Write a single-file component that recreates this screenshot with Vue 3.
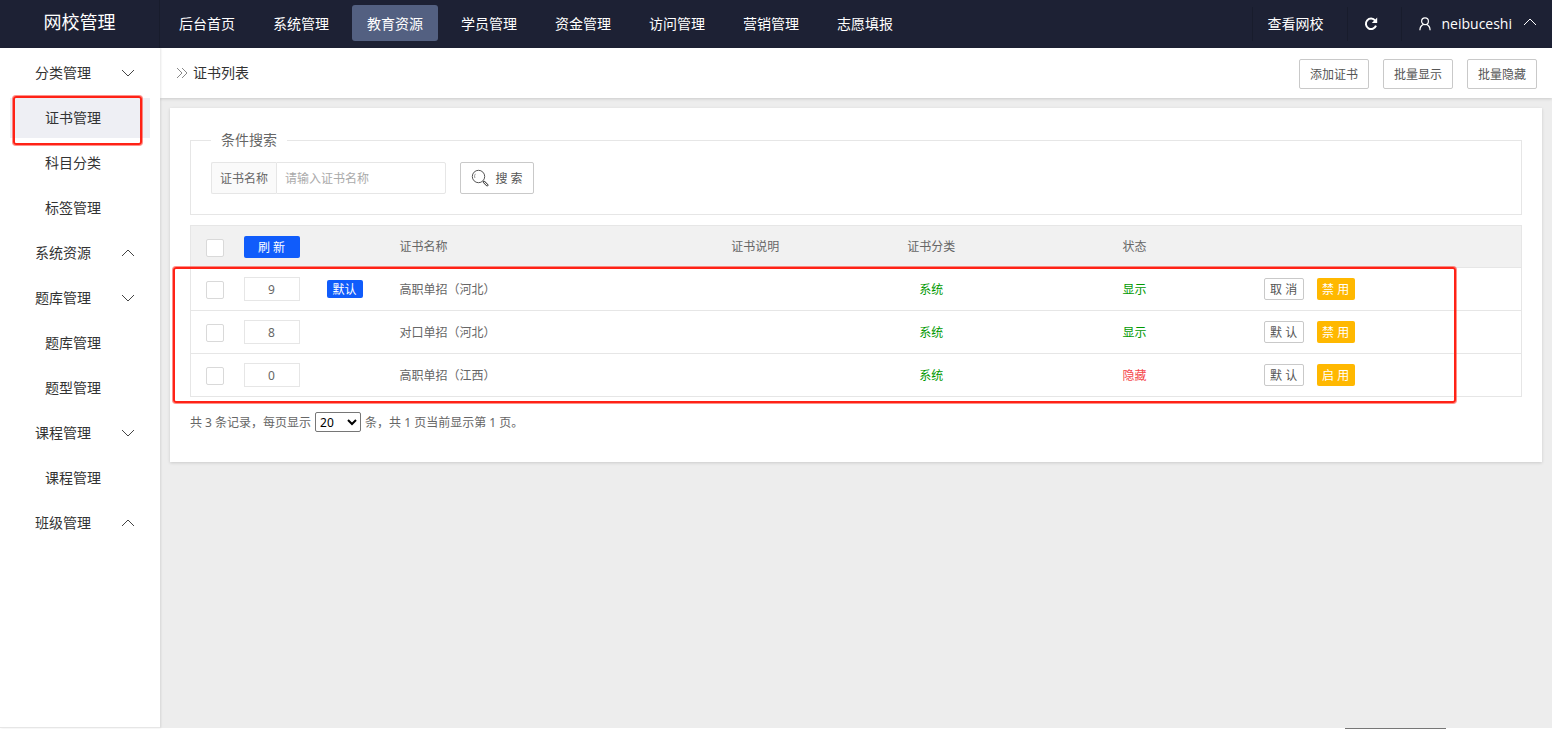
<script setup>
import { ref } from 'vue'

const navItems = ['后台首页', '系统管理', '教育资源', '学员管理', '资金管理', '访问管理', '营销管理', '志愿填报']
const activeNav = ref('教育资源')

const menu = [
  { title: '分类管理', open: true, children: ['证书管理', '科目分类', '标签管理'] },
  { title: '系统资源', open: false, children: [] },
  { title: '题库管理', open: true, children: ['题库管理', '题型管理'] },
  { title: '课程管理', open: true, children: ['课程管理'] },
  { title: '班级管理', open: false, children: [] },
]
const activeMenu = ref('证书管理')

const rows = ref([
  { id: 1, order: 9, isDefault: true, name: '高职单招（河北）', type: '系统', visible: true },
  { id: 2, order: 8, isDefault: false, name: '对口单招（河北）', type: '系统', visible: true },
  { id: 3, order: 0, isDefault: false, name: '高职单招（江西）', type: '系统', visible: false },
])
const keyword = ref('')
const pageSize = ref('20')
</script>

<template>
  <div class="page">
    <header class="top">
      <a class="logo" href="#">网校管理</a>
      <nav class="nav">
        <a v-for="n in navItems" :key="n" href="#" :class="{ on: n === activeNav }" @click.prevent="activeNav = n">{{ n }}</a>
      </nav>
      <div class="tools">
        <a class="tool view" href="#">查看网校</a>
        <button class="tool reload" type="button" aria-label="刷新页面">
          <svg width="14" height="14" viewBox="0 0 14 14">
            <path d="M11.2 3.6A5.2 5.2 0 1 0 12 8.6" fill="none" stroke="#fff" stroke-width="2" />
            <path d="M13.2 .6v5.4H7.8z" fill="#fff" />
          </svg>
        </button>
        <button class="tool user" type="button">
          <svg width="12" height="14" viewBox="0 0 12 14" fill="none" stroke="#fff" stroke-width="1.2">
            <circle cx="6" cy="4.2" r="3.4" />
            <path d="M4.6 7.4C2.4 8.2 1 10 .9 13.2M7.4 7.4c2.2.8 3.6 2.6 3.7 5.8" />
          </svg>
          <span>neibuceshi</span>
          <svg class="caret" width="14" height="8" viewBox="0 0 14 8" fill="none" stroke="#fff">
            <path d="M1 7l6-6 6 6" />
          </svg>
        </button>
      </div>
    </header>

    <div class="body">
      <aside class="side">
        <template v-for="g in menu" :key="g.title">
          <button class="group" type="button" :aria-expanded="g.open">
            <span>{{ g.title }}</span>
            <svg width="14" height="8" viewBox="0 0 14 8" fill="none" stroke="#444">
              <path :d="g.open ? 'M1 1l6 6 6-6' : 'M1 7l6-6 6 6'" />
            </svg>
          </button>
          <a v-for="c in g.children" :key="c" class="item" :class="{ on: c === activeMenu }" href="#" @click.prevent="activeMenu = c">
            {{ c }}<i v-if="c === activeMenu" class="mark mark-menu"></i>
          </a>
        </template>
      </aside>

      <main class="main">
        <div class="crumbs">
          <svg width="12" height="12" viewBox="0 0 12 12" fill="none" stroke="#888">
            <path d="M1 1l5 5-5 5M6 1l5 5-5 5" />
          </svg>
          <h1>证书列表</h1>
          <div class="actions">
            <button type="button" class="btn">添加证书</button>
            <button type="button" class="btn">批量显示</button>
            <button type="button" class="btn">批量隐藏</button>
          </div>
        </div>

        <section class="card">
          <fieldset>
            <legend>条件搜索</legend>
            <form class="search" @submit.prevent>
              <label for="kw">证书名称</label>
              <input id="kw" v-model="keyword" type="text" placeholder="请输入证书名称">
              <button type="submit" class="btn find">
                <svg width="18" height="18" viewBox="0 0 18 18" fill="none" stroke="#555">
                  <circle cx="7.5" cy="7.5" r="6.2" />
                  <path d="M3.9 9A4 4 0 0 1 4.4 4.8" stroke="#999" />
                  <path d="M12 12l1.2 1.2" />
                  <path d="M13.2 13.2l3 3" stroke-width="2.6" stroke-linecap="round" />
                  <path d="M13.4 13.4l2.6 2.6" stroke="#fff" stroke-linecap="round" />
                </svg>
                <span>搜 索</span>
              </button>
            </form>
          </fieldset>

          <div class="table-wrap">
            <table>
              <colgroup>
                <col class="c-check"><col class="c-order"><col class="c-flag"><col class="c-name">
                <col class="c-desc"><col class="c-type"><col class="c-state"><col>
              </colgroup>
              <thead>
                <tr>
                  <th><input type="checkbox" aria-label="全选"></th>
                  <th><button type="button" class="fresh">刷 新</button></th>
                  <th></th>
                  <th class="left">证书名称</th>
                  <th>证书说明</th>
                  <th class="type">证书分类</th>
                  <th>状态</th>
                  <th></th>
                </tr>
              </thead>
              <tbody>
                <tr v-for="r in rows" :key="r.id">
                  <td><input type="checkbox" :aria-label="'选择' + r.name"></td>
                  <td><input v-model="r.order" class="order" type="text" :aria-label="'排序' + r.name"></td>
                  <td><span v-if="r.isDefault" class="badge">默认</span></td>
                  <td class="text left">{{ r.name }}</td>
                  <td></td>
                  <td class="text type green">{{ r.type }}</td>
                  <td class="text" :class="r.visible ? 'green' : 'red'">{{ r.visible ? '显示' : '隐藏' }}</td>
                  <td>
                    <div class="ops">
                      <button type="button" class="btn mini plain">{{ r.isDefault ? '取 消' : '默 认' }}</button>
                      <button type="button" class="mini amber">{{ r.visible ? '禁 用' : '启 用' }}</button>
                    </div>
                  </td>
                </tr>
              </tbody>
            </table>
            <i class="mark mark-table"></i>
          </div>

          <div class="pager">
            <label for="size">共 3 条记录，每页显示</label>
            <select id="size" v-model="pageSize">
              <option>20</option>
              <option>50</option>
            </select>
            <span>条，共 1 页当前显示第 1 页。</span>
          </div>
        </section>
      </main>
    </div>
    <footer class="foot"><i></i></footer>
  </div>
</template>

<style>
body { margin: 0; }
</style>

<style scoped>
.page, .page * { box-sizing: border-box; }
.page {
  min-height: 100vh;
  display: flex;
  flex-direction: column;
  background: #ededed;
  color: #666;
  font: 12px/18px "Noto Sans", "Noto Sans CJK SC", sans-serif;
}
a { color: inherit; text-decoration: none; }
button, input, select { font: inherit; color: inherit; margin: 0; padding: 0; }
button { border: 0; background: none; cursor: pointer; white-space: nowrap; }

.top { display: flex; height: 48px; background: #1d2134; color: #fff; font-size: 14px; font-family: "Open Sans", "Noto Sans CJK SC", sans-serif; }
.logo { width: 160px; border-right: 1px solid #181c2c; text-align: center; font-size: 18px; line-height: 44px; }
.nav { display: flex; align-items: center; gap: 8px; padding: 0 4px 2px; }
.nav a { width: 86px; height: 36px; border-radius: 3px; line-height: 38px; text-align: center; white-space: nowrap; }
.nav a.on { background: #536081; }
.tools { display: flex; align-items: center; margin-left: auto; }
.tool { height: 34px; display: flex; align-items: center; border-left: 1px solid #181c2c; }
.view { padding: 0 23px 0 15px; }
.reload { padding: 0 23px 0 16px; }
.user { gap: 11px; padding: 0 15px 0 17px; }
.caret { margin-bottom: 4px; }

.body { flex: 1; display: flex; }
.side { position: relative; z-index: 1; width: 160px; padding: 5px 10px; background: #fff; border-bottom: 1px solid #e6e6e6; box-shadow: 1px 0 2px rgba(0, 0, 0, .1); color: #333; font-size: 14px; }
.group { display: flex; align-items: center; justify-content: space-between; width: 100%; height: 40px; margin-bottom: 5px; padding: 0 15px 0 25px; }
.item { position: relative; display: block; height: 40px; margin-bottom: 5px; padding-left: 35px; line-height: 40px; }
.item.on { background: #eeeff4; }

.main { flex: 1; min-width: 0; }
.crumbs { display: flex; align-items: center; height: 50px; padding: 0 15px 0 16px; background: #fff; box-shadow: 0 1px 3px rgba(0, 0, 0, .15); }
.crumbs h1 { margin: 0 0 0 5px; color: #333; font-size: 14px; font-weight: 400; }
.actions { display: flex; gap: 14px; margin-left: auto; padding-top: 2px; }
.btn { height: 30px; padding: 2px 10px 0; border: 1px solid #c9c9c9; border-radius: 2px; background: #fff; color: #555; }

.card { margin: 10px 10px 0; padding: 20px 20px 30px; background: #fff; box-shadow: 0 1px 3px rgba(0, 0, 0, .15); }
fieldset { margin: 0 0 10px; padding: 10px 20px 20px; border: 1px solid #e6e6e6; }
legend { padding: 0 10px; font-size: 14px; line-height: 24px; }
.search { display: flex; }
.search label { width: 65px; height: 32px; border: 1px solid #e6e6e6; border-right: 0; border-radius: 2px 0 0 2px; background: #fafafa; line-height: 32px; text-align: center; }
.search input { width: 170px; height: 32px; padding: 0 8px; border: 1px solid #e6e6e6; border-radius: 0 2px 2px 0; outline: 0; }
.search input::placeholder { color: #aaa; }
.find { display: flex; align-items: center; justify-content: center; gap: 6px; width: 74px; height: 32px; margin-left: 14px; padding: 0; }
.find span { padding-top: 2px; }

.table-wrap { position: relative; }
table { width: 100%; table-layout: fixed; border-collapse: collapse; border: 1px solid #e6e6e6; }
.c-check { width: 46px; }
.c-order { width: 70px; }
.c-flag { width: 76px; }
.c-name { width: 22%; }
.c-desc { width: 12%; }
.c-type { width: 14%; }
.c-state { width: 17%; }
tr { height: 43px; border-bottom: 1px solid #e6e6e6; }
th, td { padding: 0; text-align: center; font-weight: 400; vertical-align: middle; }
thead { background: #f1f1f1; }
thead tr { height: 42px; }
.text { padding-top: 2px; }
.left { padding-left: 17px; text-align: left; }
.type { padding-left: 6px; }
input[type="checkbox"] { appearance: none; display: block; width: 18px; height: 18px; margin: 2px 0 0 15px; border: 1px solid #d9d9d9; border-radius: 2px; background: #fff; }
.fresh { display: block; width: 56px; height: 22px; margin: 0 auto; padding-top: 2px; border-radius: 2px; background: #105cfb; color: #fff; }
.order { display: block; width: 56px; height: 24px; margin: 0 auto; border: 1px solid #e6e6e6; text-align: center; }
.badge { display: block; width: 36px; height: 18px; margin: 0 auto; border-radius: 2px; background: #105cfb; color: #fff; line-height: 20px; }
.green { color: #090; }
.red { color: #f5484d; }
.ops { display: flex; gap: 13px; padding-left: 16px; }
.mini { width: 38px; height: 22px; padding: 2px 0 0; border-radius: 2px; }
.plain { width: 40px; }
.amber { background: #ffb800; color: #fff; }

.pager { display: flex; align-items: center; gap: 4px; margin-top: 15px; }
.pager label, .pager span { padding-top: 2px; }
.pager select { width: 46px; height: 20px; border: 1px solid #767676; border-radius: 2px; background: #fff; color: #000; }

.mark { position: absolute; z-index: 2; border: 2px solid #ff2216; border-radius: 3px; box-shadow: 0 0 0 1px rgba(255, 34, 22, .5); pointer-events: none; }
.mark-menu { top: -2px; right: 8px; bottom: -7px; left: 3px; }
.mark-table { top: 42px; right: 66px; bottom: -6px; left: -17px; }

.foot { display: flex; justify-content: flex-end; height: 1px; padding-right: 106px; background: #fff; }
.foot i { width: 101px; background: #777; }
</style>
